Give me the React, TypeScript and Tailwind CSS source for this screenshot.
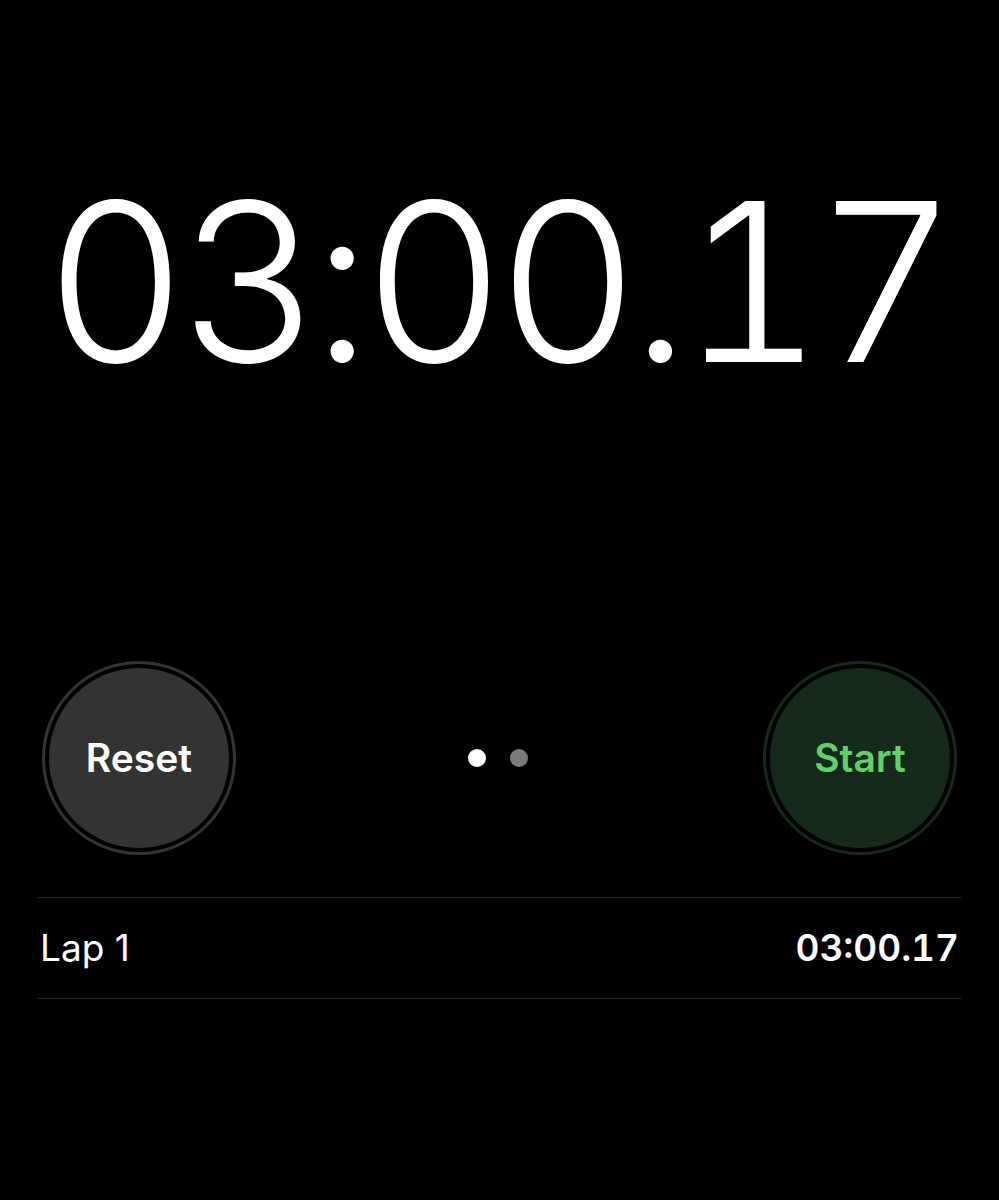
export default function App() {
  return (
    <div className="flex h-[1200px] w-[999px] flex-col bg-black text-white" style={{ fontFamily: "Inter, 'Noto Sans', sans-serif" }}>
      <div className="flex h-[560px] items-center justify-center pr-[6px] pt-[2px]">
        <span className="text-[221px] font-light leading-none tracking-[-9px] [font-variant-numeric:tabular-nums]">03:00.17</span>
      </div>
      <div className="flex items-center justify-between px-[42px] pt-[101px]">
        <div className="flex h-[194px] w-[194px] items-center justify-center rounded-full border-[3px] border-[#333333] p-[4px]">
          <div className="flex h-full w-full items-center justify-center rounded-full bg-[#333333]">
            <span className="text-[39px] font-semibold">Reset</span>
          </div>
        </div>
        <div className="flex items-center gap-[24px] pr-[4px]">
          <div className="h-[18px] w-[18px] rounded-full bg-white" />
          <div className="h-[18px] w-[18px] rounded-full bg-[#7a7a7a]" />
        </div>
        <div className="flex h-[194px] w-[194px] items-center justify-center rounded-full border-[3px] border-[#16291a] p-[4px]">
          <div className="flex h-full w-full items-center justify-center rounded-full bg-[#16291a]">
            <span className="text-[39px] font-semibold text-[#60d06c]">Start</span>
          </div>
        </div>
      </div>
      <div className="mx-[38px] mt-[42px] flex h-[102px] items-center justify-between border-y border-[#2a2a2a] pl-[2px] pr-[2px]">
        <span className="text-[37px]">Lap 1</span>
        <span className="text-[37px] font-semibold [font-variant-numeric:tabular-nums]">03:00.17</span>
      </div>
    </div>
  );
}
